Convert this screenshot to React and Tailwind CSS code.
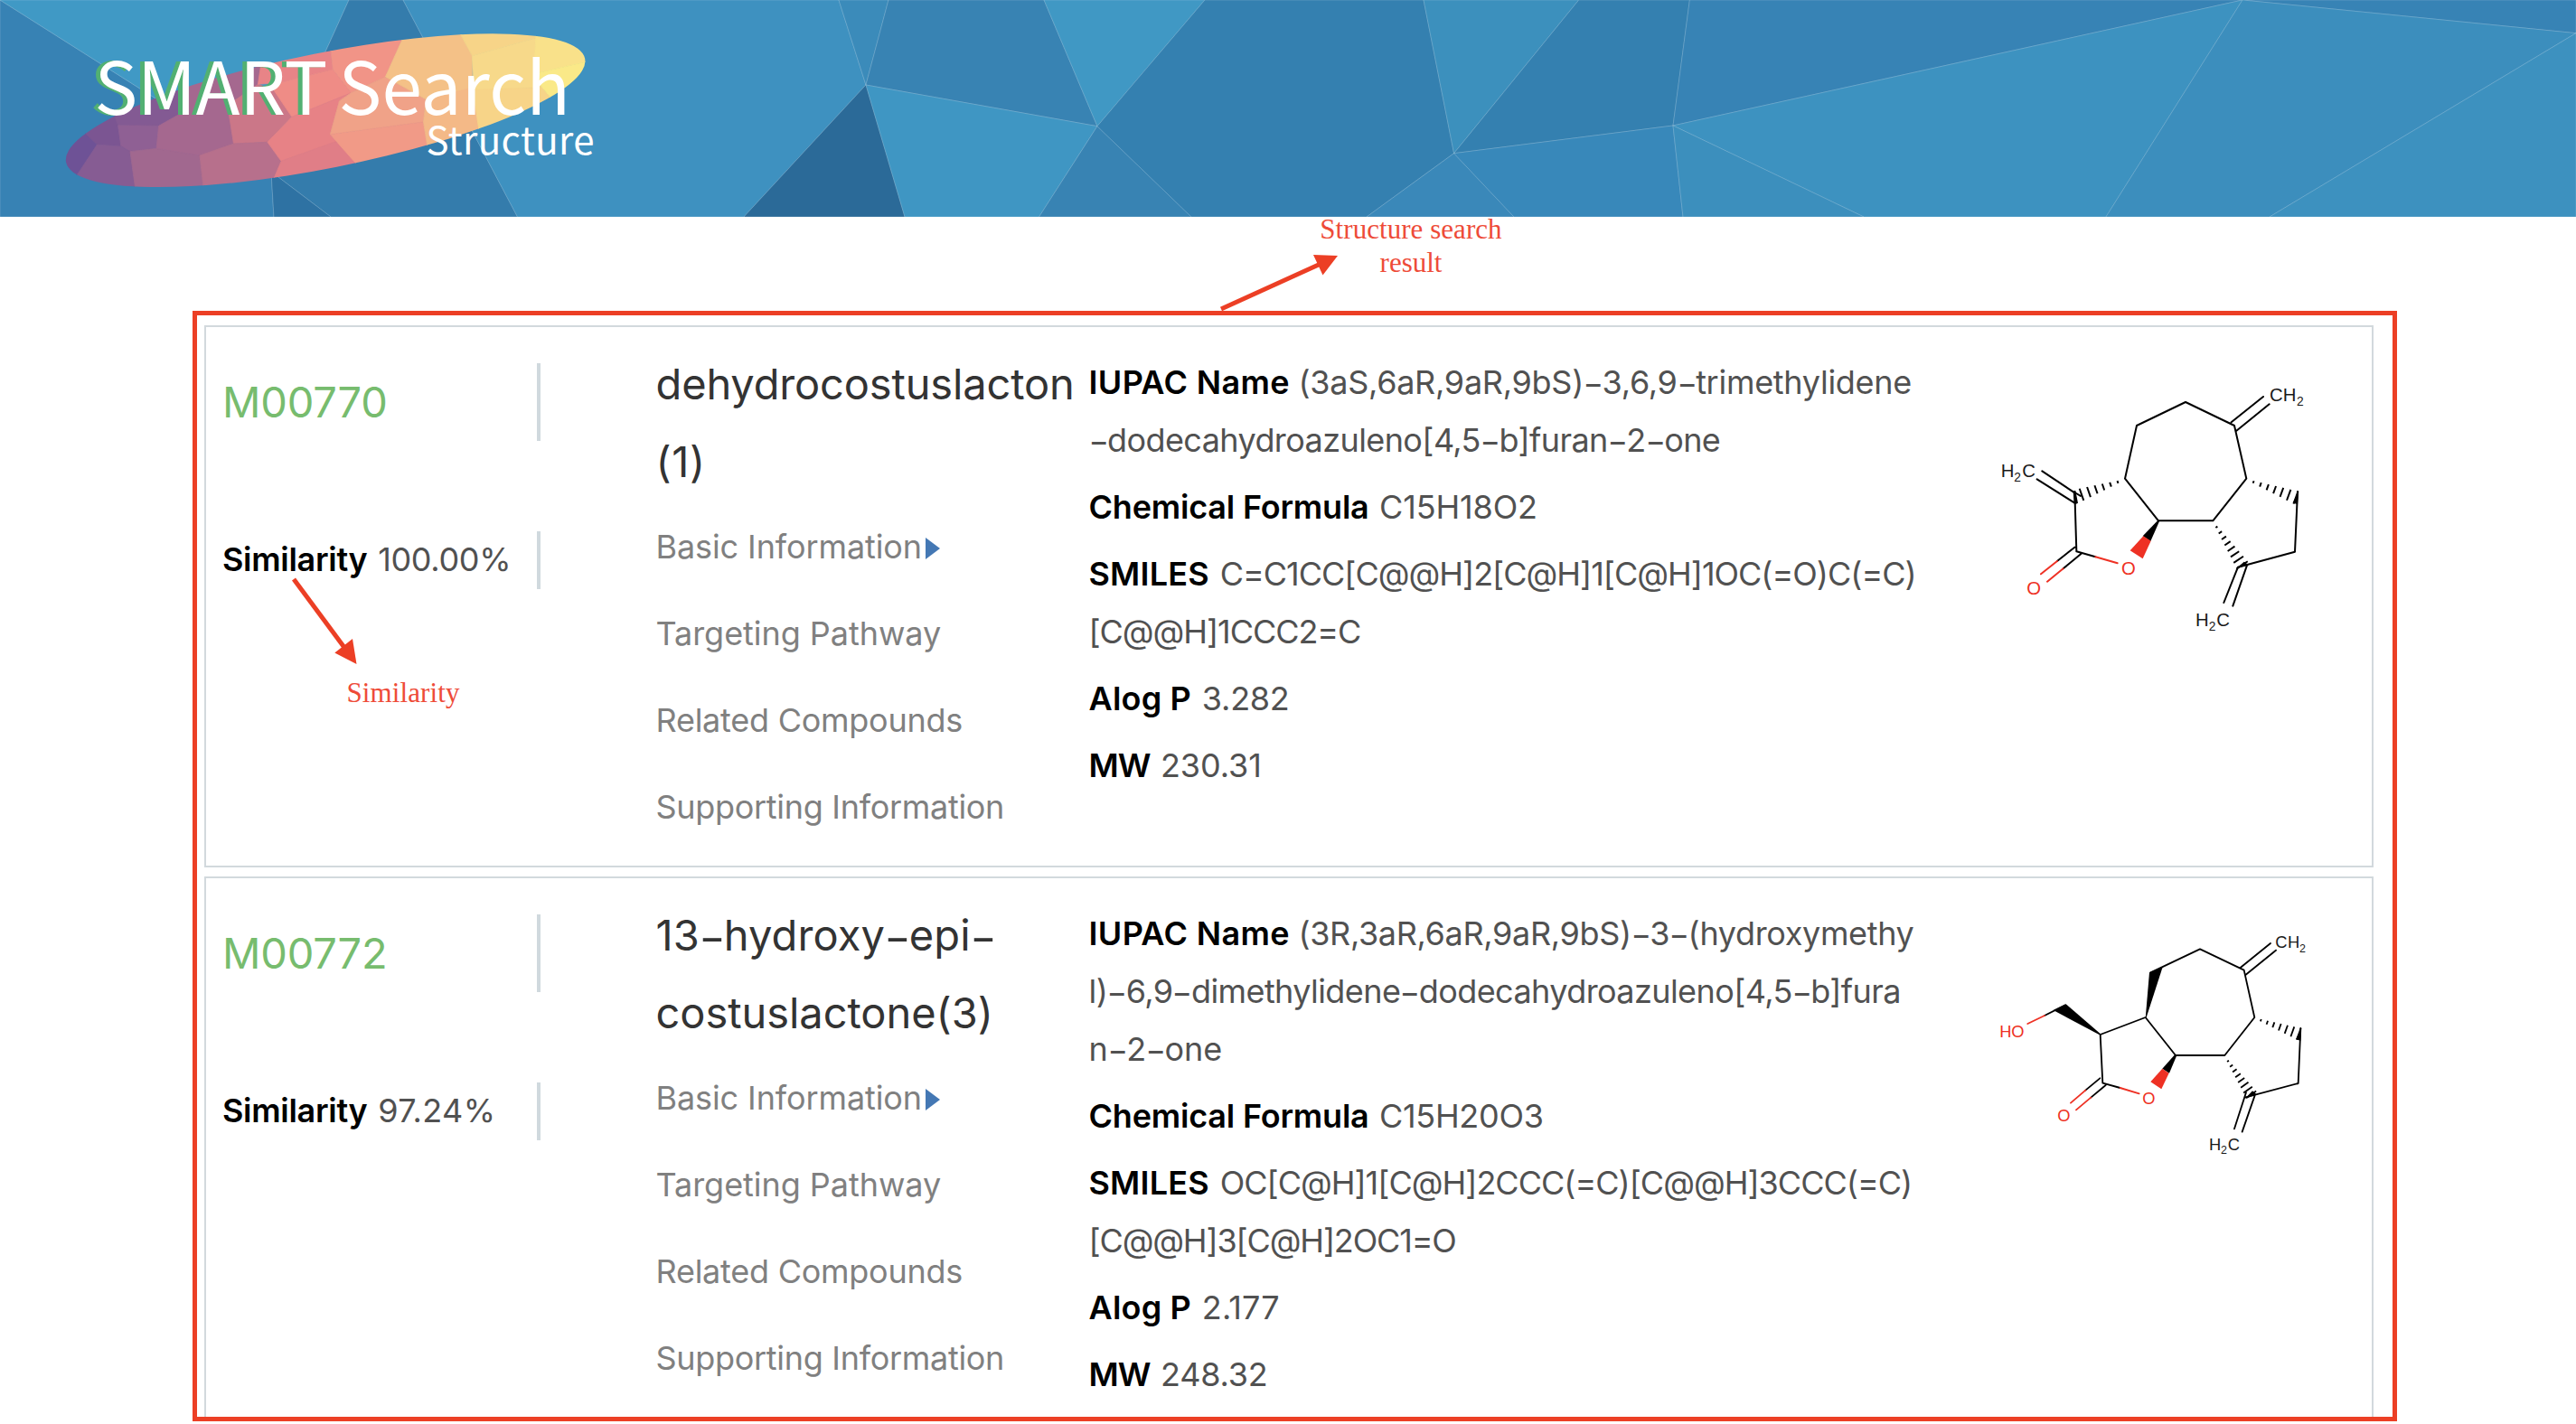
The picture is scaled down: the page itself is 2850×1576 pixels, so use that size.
import React from "react";

const FACETS = [
  ["0,0 300,190 303,240 0,240", "#3782b4"],
  ["0,0 386,0 300,190", "#4099c5"],
  ["386,0 446,0 572.5,240 366,240 300,190", "#347cac"],
  ["300,190 366,240 303,240", "#2e72a3"],
  ["446,0 928,0 958,94 823,240 572.5,240", "#3e91c0"],
  ["928,0 983,0 958,94", "#3b8bba"],
  ["983,0 1155,0 1214,139.7 958,94", "#3883b3"],
  ["1155,0 1333,0 1214,139.7", "#4098c4"],
  ["958,94 1001,240 823,240", "#2b6a98"],
  ["958,94 1214,139.7 1149.6,240 1001,240", "#3f96c3"],
  ["1214,139.7 1318,240 1149.6,240", "#3883b3"],
  ["1333,0 1575,0 1608.6,169.7 1512,240 1318,240 1214,139.7", "#3480b0"],
  ["1575,0 1746.7,0 1608.6,169.7", "#3c90bd"],
  ["1746.7,0 1869.4,0 1851,139 1608.6,169.7", "#3480b0"],
  ["1608.6,169.7 1675,240 1512,240", "#3a88b9"],
  ["1608.6,169.7 1851,139 1862,240 1675,240", "#3888ba"],
  ["1869.4,0 2481,0 1851,139", "#3783b5"],
  ["2481,0 2850,0 2850,36.7", "#3783b5"],
  ["1851,139 2481,0 2330,240 2062,240", "#3d92c0"],
  ["1851,139 2062,240 1862,240", "#3c8fbd"],
  ["2481,0 2850,36.7 2511,240 2330,240", "#3c8ebd"],
  ["2850,36.7 2850,240 2511,240", "#3d91bf"],
];

const CELLS = [
  ["60,440 127,440 160,480 108,580 60,620", "#6e5296"],
  ["120,440 205,360 215,418 223,486 160,480 127,440", "#7b5592"],
  ["205,380 300,250 400,285 400,360 375,380 322,418 215,416", "#835a93"],
  ["215,416 322,418 316,493 247,503 223,486", "#8f6094"],
  ["160,480 223,486 247,503 262,640 60,640 108,580", "#865c93"],
  ["247,503 316,493 430,516 441,640 262,640", "#a1688f"],
  ["322,418 375,380 400,360 400,200 595,200 583,280 503,350 519,477 430,516 316,493", "#a5688f"],
  ["519,477 503,350 583,280 630,300 672,388 608,472", "#cb7788"],
  ["430,516 519,477 608,472 644,535 622,600 441,640", "#b7708c"],
  ["595,180 770,130 780,230 640,275 583,280", "#e88487"],
  ["640,275 780,230 828,308 672,388 625,300", "#ef8c86"],
  ["672,388 828,308 797,335 773,446 790,470 644,535 608,472", "#e78286"],
  ["644,535 787,470 800,475 840,542 840,620 612,630", "#e07e87"],
  ["770,120 962,90 962,132 918,255 828,308 780,230", "#f19487"],
  ["828,308 918,255 1025,330 1018,405 773,446 797,335", "#f0a288"],
  ["773,446 1018,405 1030,500 840,560 840,542", "#f19a87"],
  ["962,90 1110,80 1117,118 1146,185 1146,295 1025,330 918,255 962,132", "#f4c187"],
  ["1025,330 1150,290 1166,440 1030,500 1018,405", "#f4b987"],
  ["1110,80 1315,90 1315,125 1146,185 1117,118", "#f7d488"],
  ["1146,185 1315,125 1308,245 1330,290 1150,300", "#f7d98a"],
  ["1148,298 1330,290 1353,325 1370,420 1166,450", "#f7d488"],
  ["1315,90 1460,100 1445,205 1308,245", "#f9e18a"],
  ["1308,245 1445,205 1470,300 1353,325 1330,290", "#fae988"],
];

const LOGO_FONT = "font-['Noto_Sans_CJK_SC',sans-serif]";

function Banner() {
  return (
    <header className="h-[240px] w-full">
      <svg className="block h-[240px] w-[2850px]" viewBox="0 0 2850 240">
        <rect width="2850" height="240" fill="#3782b4" />
        {FACETS.map(([p, c]) => (
          <polygon key={p} points={p} fill={c} stroke="#fff" strokeOpacity="0.22" strokeWidth="0.8" />
        ))}
        <clipPath id="oval">
          <ellipse cx="360.1" cy="122.2" rx="292.7" ry="63.8" transform="rotate(-11.3 360.1 122.2)" />
        </clipPath>
        <g clipPath="url(#oval)">
          <g transform="translate(40 0) scale(0.42091 0.33333)">
            {CELLS.map(([p, c]) => (
              <polygon key={p} points={p} fill={c} stroke={c} strokeWidth="2" />
            ))}
          </g>
        </g>
        <g className={LOGO_FONT} fontSize="80">
          <text className="[text-shadow:none] [filter:drop-shadow(-4.5px_0.5px_0_#52b072)]" x="104.5" y="126.5" fill="#fff" letterSpacing="-0.2">SMART</text>
          <text x="374.5" y="126.5" fill="#fff" letterSpacing="0.2">Search</text>
          <text x="471.5" y="170.5" fill="#fff" fontSize="42" letterSpacing="0.4">Structure</text>
        </g>
      </svg>
    </header>
  );
}

const INK = "#000";
const OXY = "#ee3124";

function Bonds({ d, color = INK, w = 6 }) {
  return <path d={d} fill="none" stroke={color} strokeWidth={w} strokeLinecap="round" strokeLinejoin="round" />;
}

/* Hashed wedge from the stereocentre (x1,y1) that widens towards (x2,y2). */
function Hash({ x1, y1, x2, y2, n = 7, width = 44, w = 6 }) {
  const len = Math.hypot(x2 - x1, y2 - y1);
  const nx = -(y2 - y1) / len;
  const ny = (x2 - x1) / len;
  let d = "";
  for (let i = 1; i <= n; i++) {
    const t = i / n;
    const h = (width * t) / 2 + 1;
    const x = x1 + (x2 - x1) * t;
    const y = y1 + (y2 - y1) * t;
    d += `M${x - nx * h} ${y - ny * h}L${x + nx * h} ${y + ny * h}`;
  }
  return <path d={d} fill="none" stroke={INK} strokeWidth={w} />;
}

function Atoms({ items, size }) {
  return (
    <g className="font-['Liberation_Sans',sans-serif]" fontSize={size}>
      {items.map(([t, x, y, c, sub]) => (
        <text key={t + x} x={x} y={y} fill={c || "#1a1a1a"} fontSize={sub ? size * 0.68 : size}>{t}</text>
      ))}
    </g>
  );
}

function Dehydrocostuslactone() {
  return (
    <svg className="block h-[320px] w-[400px]" viewBox="0 0 1200 960">
      <Bonds d="M513 389L552 213L714 135L876 213L916 389L805 529H624L513 389M866 202L972 117M883 230L992 142M352 631L346 432M347 437L238 364M346 470L221 391M352 631L415 649M346 617L288 663M367 639L308 688M1086 432L1077 632L888 683M888 683L841 801M918 677L871 812" />
      <Bonds d="M415 649L488 670M288 663L234 706M308 688L255 731" color={OXY} />
      <polygon points="624,526 627,531 598,597 572,580" fill={INK} />
      <polygon points="574,580 599,596 572,655 530,628" fill={OXY} />
      <polygon points="341,432 349,430 357,470 345,476" fill={INK} />
      <polygon points="1089,430 1086,474 1070,470" fill={INK} />
      <polygon points="884,687 908,665 924,676" fill={INK} />
      <path d="M346 435L368 448" stroke={INK} strokeWidth="6" />
      <Hash x1={513} y1={392} x2={369} y2={442} n={6} width={40} />
      <Hash x1={916} y1={392} x2={1080} y2={452} n={7} width={42} />
      <Hash x1={805} y1={532} x2={902} y2={676} n={8} width={42} />
      <Atoms
        size={61}
        items={[
          ["C", 993, 132], ["H", 1037, 132], ["2", 1083, 147, null, true],
          ["H", 101, 383], ["2", 145, 398, null, true], ["C", 172, 383],
          ["H", 747, 880], ["2", 791, 894, null, true], ["C", 817, 880],
          ["O", 501, 709, OXY], ["O", 187, 774, OXY],
        ]}
      />
    </svg>
  );
}

function HydroxyEpiCostuslactone() {
  return (
    <svg className="block h-[320px] w-[400px]" viewBox="0 0 1200 960">
      <Bonds w={5.5} d="M598 199L762 121L908 191L943 348L844 474H681L581 348L431 405L439 566L497 582M895 184L996 102M914 206L1014 125M246 342L315 307M1096 384L1088 567L914 613M915 597L876 718M945 604L902 728M430 550L382 590M449 573L400 614" />
      <Bonds w={5.5} d="M246 342L190 369M497 582L560 601M382 590L333 632M400 614L351 655" color={OXY} />
      <polygon points="581,352 584,348 638,181 594,199" fill={INK} />
      <polygon points="434,409 431,402 317,304 275,324" fill={INK} />
      <polygon points="679,471 684,476 660,533 637,518" fill={INK} />
      <polygon points="637,518 659,533 634,586 598,562" fill={OXY} />
      <polygon points="1098,384 1096,425 1080,421" fill={INK} />
      <polygon points="912,617 936,592 950,604" fill={INK} />
      <Hash x1={943} y1={350} x2={1090} y2={403} n={7} width={38} w={5.5} />
      <Hash x1={844} y1={477} x2={932} y2={604} n={8} width={38} w={5.5} />
      <Atoms
        size={55}
        items={[
          ["C", 1012, 118], ["H", 1053, 118], ["2", 1092, 131, null, true],
          ["H", 792, 788], ["2", 831, 801, null, true], ["C", 854, 788],
          ["H", 97, 414, OXY], ["O", 136, 414, OXY],
          ["O", 571, 635, OXY], ["O", 289, 694, OXY],
        ]}
      />
    </svg>
  );
}

/* Renders a chemical name with wide, low hyphens. */
function Name({ children }) {
  return children.split(/(-)/).map((part, i) =>
    part === "-" ? (
      <span key={i} className="relative top-[0.06em] inline-block w-[0.57em] origin-left translate-x-[-0.015em] scale-x-[1.36]">-</span>
    ) : (
      part
    )
  );
}

const LINKS = [
  ["Basic Information", "tracking-[-0.1px]"],
  ["Targeting Pathway", "tracking-[-0.05px]"],
  ["Related Compounds", "tracking-[-0.25px]"],
  ["Supporting Information", "tracking-[-0.3px]"],
];

const LABEL_TRACKING = {
  "IUPAC Name": "tracking-[0.36px]",
  "Chemical Formula": "mr-[2.5px] tracking-[-0.2px]",
  SMILES: "mr-[2.5px] tracking-[0.2px]",
  "Alog P": "mr-[2.5px] tracking-[0.2px]",
  MW: "mr-[3.5px] tracking-[-1px]",
};

const COMPOUNDS = [
  {
    id: "M00770",
    score: ["100.00%", "tracking-[-0.33px]"],
    title: [["dehydrocostuslacton", "tracking-[-0.15px]"], ["(1)", "tracking-[0.6px]"]],
    facts: [
      ["IUPAC Name", [["(3aS,6aR,9aR,9bS)-3,6,9-trimethylidene", "tracking-[-0.28px]"], ["-dodecahydroazuleno[4,5-b]furan-2-one", "tracking-[-0.59px]"]]],
      ["Chemical Formula", [["C15H18O2", "tracking-[-0.14px]"]]],
      ["SMILES", [["C=C1CC[C@@H]2[C@H]1[C@H]1OC(=O)C(=C)", "tracking-[-1px]"], ["[C@@H]1CCC2=C", "tracking-[-1.05px]"]]],
      ["Alog P", [["3.282", "tracking-[-0.25px]"]]],
      ["MW", [["230.31", "tracking-[-0.1px]"]]],
    ],
    drawing: <Dehydrocostuslactone />,
  },
  {
    id: "M00772",
    score: ["97.24%", "tracking-[0.4px]"],
    title: [["13-hydroxy-epi-", "tracking-[0.12px]"], ["costuslactone(3)", "tracking-[-0.05px]"]],
    facts: [
      ["IUPAC Name", [["(3R,3aR,6aR,9aR,9bS)-3-(hydroxymethy", "tracking-[-0.35px]"], ["l)-6,9-dimethylidene-dodecahydroazuleno[4,5-b]fura", "tracking-[-0.59px]"], ["n-2-one", "tracking-[-0.1px]"]]],
      ["Chemical Formula", [["C15H20O3", "tracking-[-0.3px]"]]],
      ["SMILES", [["OC[C@H]1[C@H]2CCC(=C)[C@@H]3CCC(=C)", "tracking-[-0.99px]"], ["[C@@H]3[C@H]2OC1=O", "tracking-[-1.15px]"]]],
      ["Alog P", [["2.177", "tracking-[0.1px]"]]],
      ["MW", [["248.32", "tracking-[-0.2px]"]]],
    ],
    drawing: <HydroxyEpiCostuslactone />,
  },
];

function Card({ id, score, title, facts, drawing }) {
  return (
    <article className="flex h-[600px] w-[2400px] shrink-0 border-2 border-[#d2d9dd] pl-[18px] text-[36px] leading-[64px] whitespace-nowrap">
      <div className="w-[352px] shrink-0 pt-10">
        <h2 className="h-[86px] border-r-4 border-[#d0d9de] text-[47px] leading-[85px] tracking-[-0.2px] text-[#77bc6e]">{id}</h2>
        <p className="mt-[100px] h-16 border-r-4 border-[#d0d9de] leading-[62px] text-[#515151]">
          <span className="mr-[1.5px] font-semibold tracking-[-0.3px] text-black">Similarity</span>{" "}
          <span className={score[1]}>{score[0]}</span>
        </p>
      </div>
      <div className="ml-[127.5px] w-[479px] shrink-0 pt-5">
        <h3 className="text-[47px] leading-[86px] text-[#333]">
          {title.map(([t, tr]) => (
            <span key={t} className={"block " + tr}><Name>{t}</Name></span>
          ))}
        </h3>
        <ul className="mt-[19px] flex flex-col gap-8 text-[#808080]">
          {LINKS.map(([t, tr], i) => (
            <li key={t} className="flex items-center">
              <span className={tr}>{t}</span>
              {i === 0 && (
                <svg className="mt-1 ml-[3.5px] h-6 w-4" viewBox="0 0 16 24">
                  <path d="M0 0L16 12L0 24Z" fill="#4478b4" />
                </svg>
              )}
            </li>
          ))}
        </ul>
      </div>
      <dl className="flex w-[975.5px] shrink-0 flex-col gap-2.5 pt-[29px]">
        {facts.map(([label, lines]) => (
          <div key={label}>
            {lines.map(([t, tr], i) => (
              <div key={t}>
                {i === 0 && <dt className={"inline font-semibold text-black " + LABEL_TRACKING[label]}>{label} </dt>}
                <dd className={"inline text-[#515151] " + tr}><Name>{t}</Name></dd>
              </div>
            ))}
          </div>
        ))}
      </dl>
      <div className="pt-[38px]">{drawing}</div>
    </article>
  );
}

function Annotations() {
  return (
    <div className="pointer-events-none font-['Liberation_Serif',serif] text-[31px] leading-[37px] text-[#ee4b38]">
      <div className="absolute top-[344px] left-[213px] h-[1229px] w-[2439px] border-5 border-[#ec3f25]" />
      <svg className="absolute top-[275px] left-[1345px] h-[75px] w-[140px]" viewBox="1345 275 140 75">
        <path d="M1351 342L1461 292" stroke="#ec3f25" strokeWidth="5" />
        <polygon points="1480,283 1453,282 1463.5,304.5" fill="#ec3f25" />
      </svg>
      <p className="absolute top-[235px] left-[1440px] w-[242px] text-center">
        <span className="tracking-[0.05px]">Structure search</span>
        <br />
        result
      </p>
      <svg className="absolute top-[635px] left-[315px] h-[105px] w-[90px]" viewBox="315 635 90 105">
        <path d="M325 641L382 718" stroke="#ec3f25" strokeWidth="5" />
        <polygon points="394.5,735 370.3,722.5 390,707" fill="#ec3f25" />
      </svg>
      <p className="absolute top-[748px] left-[383.5px] tracking-[0.1px]">Similarity</p>
    </div>
  );
}

export default function App() {
  return (
    <div className="relative h-[1576px] w-[2850px] overflow-hidden bg-white font-['Inter',sans-serif]">
      <Banner />
      <main className="mt-[120px] ml-[226px] flex flex-col gap-2.5">
        {COMPOUNDS.map((c) => (
          <Card key={c.id} {...c} />
        ))}
      </main>
      <Annotations />
    </div>
  );
}
